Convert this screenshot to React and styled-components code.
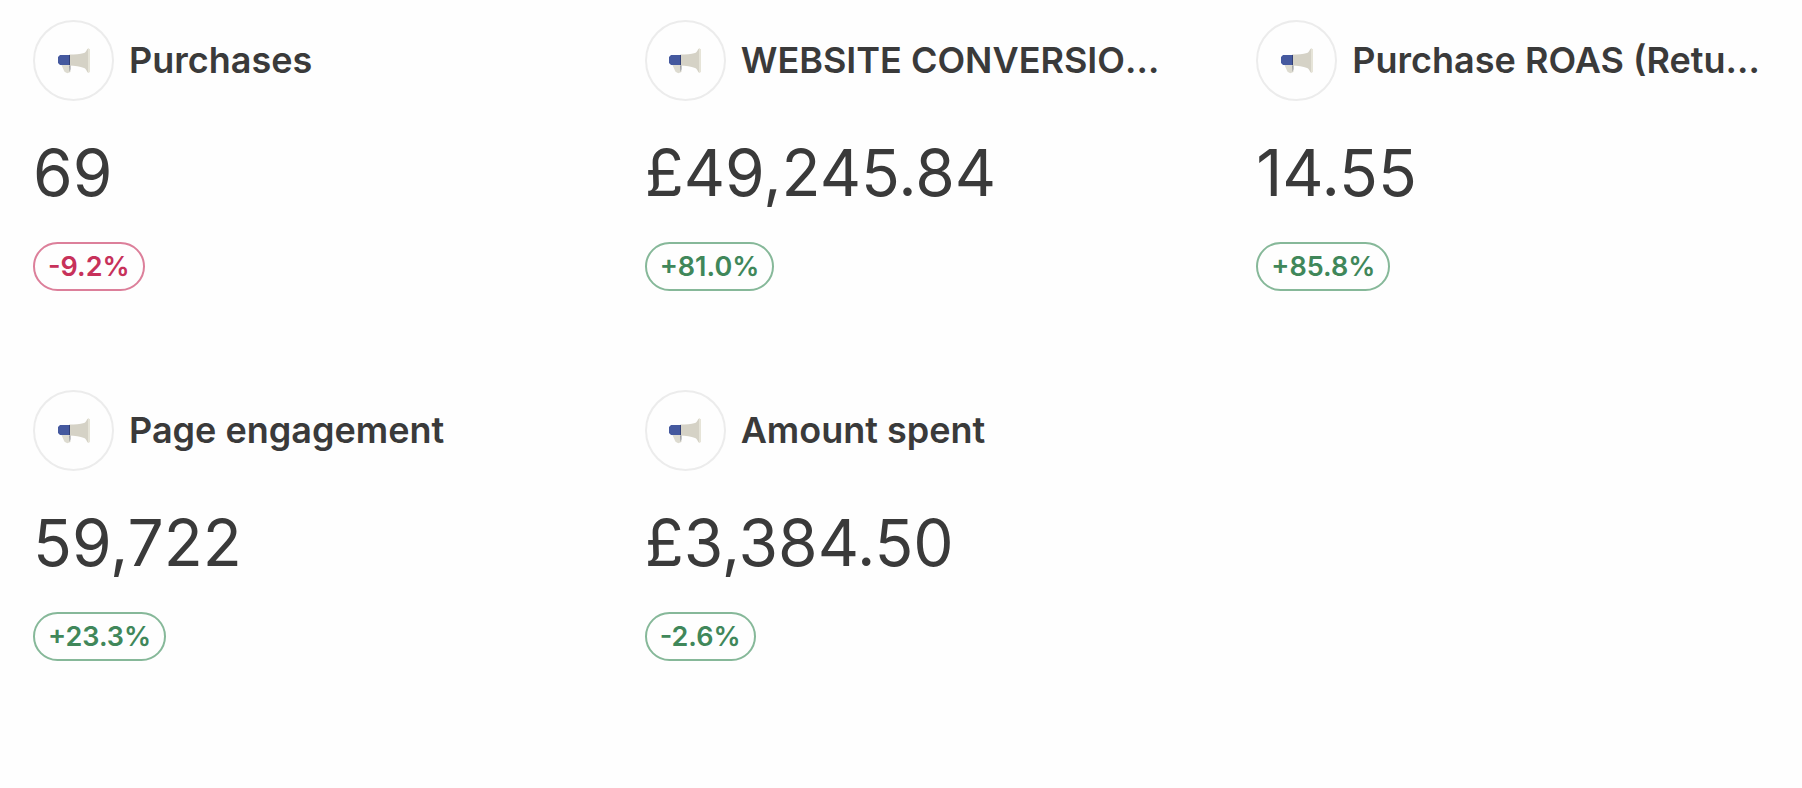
import React from "react";
import styled, { createGlobalStyle } from "styled-components";

const GlobalStyle = createGlobalStyle`
  *, *::before, *::after { box-sizing: border-box; }
  body {
    margin: 0;
    background: #fefefe;
    color: #3a3a3a;
    font-family: Inter, "Liberation Sans", sans-serif;
  }
`;

const MetricGrid = styled.main`
  display: grid;
  grid-template-columns: repeat(3, minmax(0, 1fr));
  gap: 99px 94px;
  padding: 20px 28px 20px 33px;
`;

const Metric = styled.section`
  display: flex;
  flex-direction: column;
  align-items: flex-start;
  min-width: 0;
`;

const MetricHeader = styled.header`
  display: flex;
  align-items: center;
  gap: 15px;
  width: 100%;
`;

const SourceBadge = styled.span`
  display: flex;
  flex: none;
  align-items: center;
  justify-content: center;
  width: 81px;
  height: 81px;
  border: 2px solid #ececec;
  border-radius: 50%;
`;

const Title = styled.h2`
  flex: 1;
  min-width: 0;
  margin: 0;
  padding-bottom: 2px;
  overflow: hidden;
  font-size: 36px;
  font-weight: 600;
  line-height: 46px;
  text-overflow: ellipsis;
  white-space: nowrap;
`;

const Value = styled.p`
  margin: 34px 0 31px;
  font-size: 64px;
  font-weight: 400;
  line-height: 76px;
`;

const Change = styled.span`
  padding: 0 13px;
  border: 2px solid ${({ $good }) => ($good ? "#86b899" : "#dc7f9a")};
  border-radius: 25px;
  color: ${({ $good }) => ($good ? "#40875a" : "#c7315a")};
  font-size: 27px;
  font-weight: 600;
  line-height: 45px;
`;

function Megaphone() {
  return (
    <svg width="34" height="26" viewBox="0 0 34 26" aria-hidden="true">
      <path d="M4 16h8.500l1 8-3.200 1.200-2.800-1.400z" fill="#dddbd0" />
      <path d="M12 16h1.500v5l-.8 3z" fill="#8b8e94" />
      <path d="M12 6.500c6 0 11-.2 15-1.500 1.500-.6 2.500-2 3-3.500L31 .5l1.500.5v23l-1.500.7-1-1.200c-.5-1.500-1.500-3-3-3.500C23 18.500 18 17.500 12 17.500z" fill="#d5d2c6" />
      <path d="M31 .5l2 .8v22.600l-2 .8z" fill="#e6e4d8" />
      <path d="M3 7h9.500v10H3L1 15V9z" fill="#45599f" />
      <path d="M12 7h1v10h-1z" fill="#323f75" />
    </svg>
  );
}

const metrics = [
  { title: "Purchases", value: "69", change: "-9.2%", good: false },
  { title: "WEBSITE CONVERSION VALUE", value: "£49,245.84", change: "+81.0%", good: true },
  { title: "Purchase ROAS (Return on ad spend)", value: "14.55", change: "+85.8%", good: true },
  { title: "Page engagement", value: "59,722", change: "+23.3%", good: true },
  { title: "Amount spent", value: "£3,384.50", change: "-2.6%", good: true },
];

export default function App() {
  return (
    <>
      <GlobalStyle />
      <MetricGrid>
        {metrics.map((m) => (
          <Metric key={m.title}>
            <MetricHeader>
              <SourceBadge>
                <Megaphone />
              </SourceBadge>
              <Title>{m.title}</Title>
            </MetricHeader>
            <Value>{m.value}</Value>
            <Change $good={m.good}>{m.change}</Change>
          </Metric>
        ))}
      </MetricGrid>
    </>
  );
}
